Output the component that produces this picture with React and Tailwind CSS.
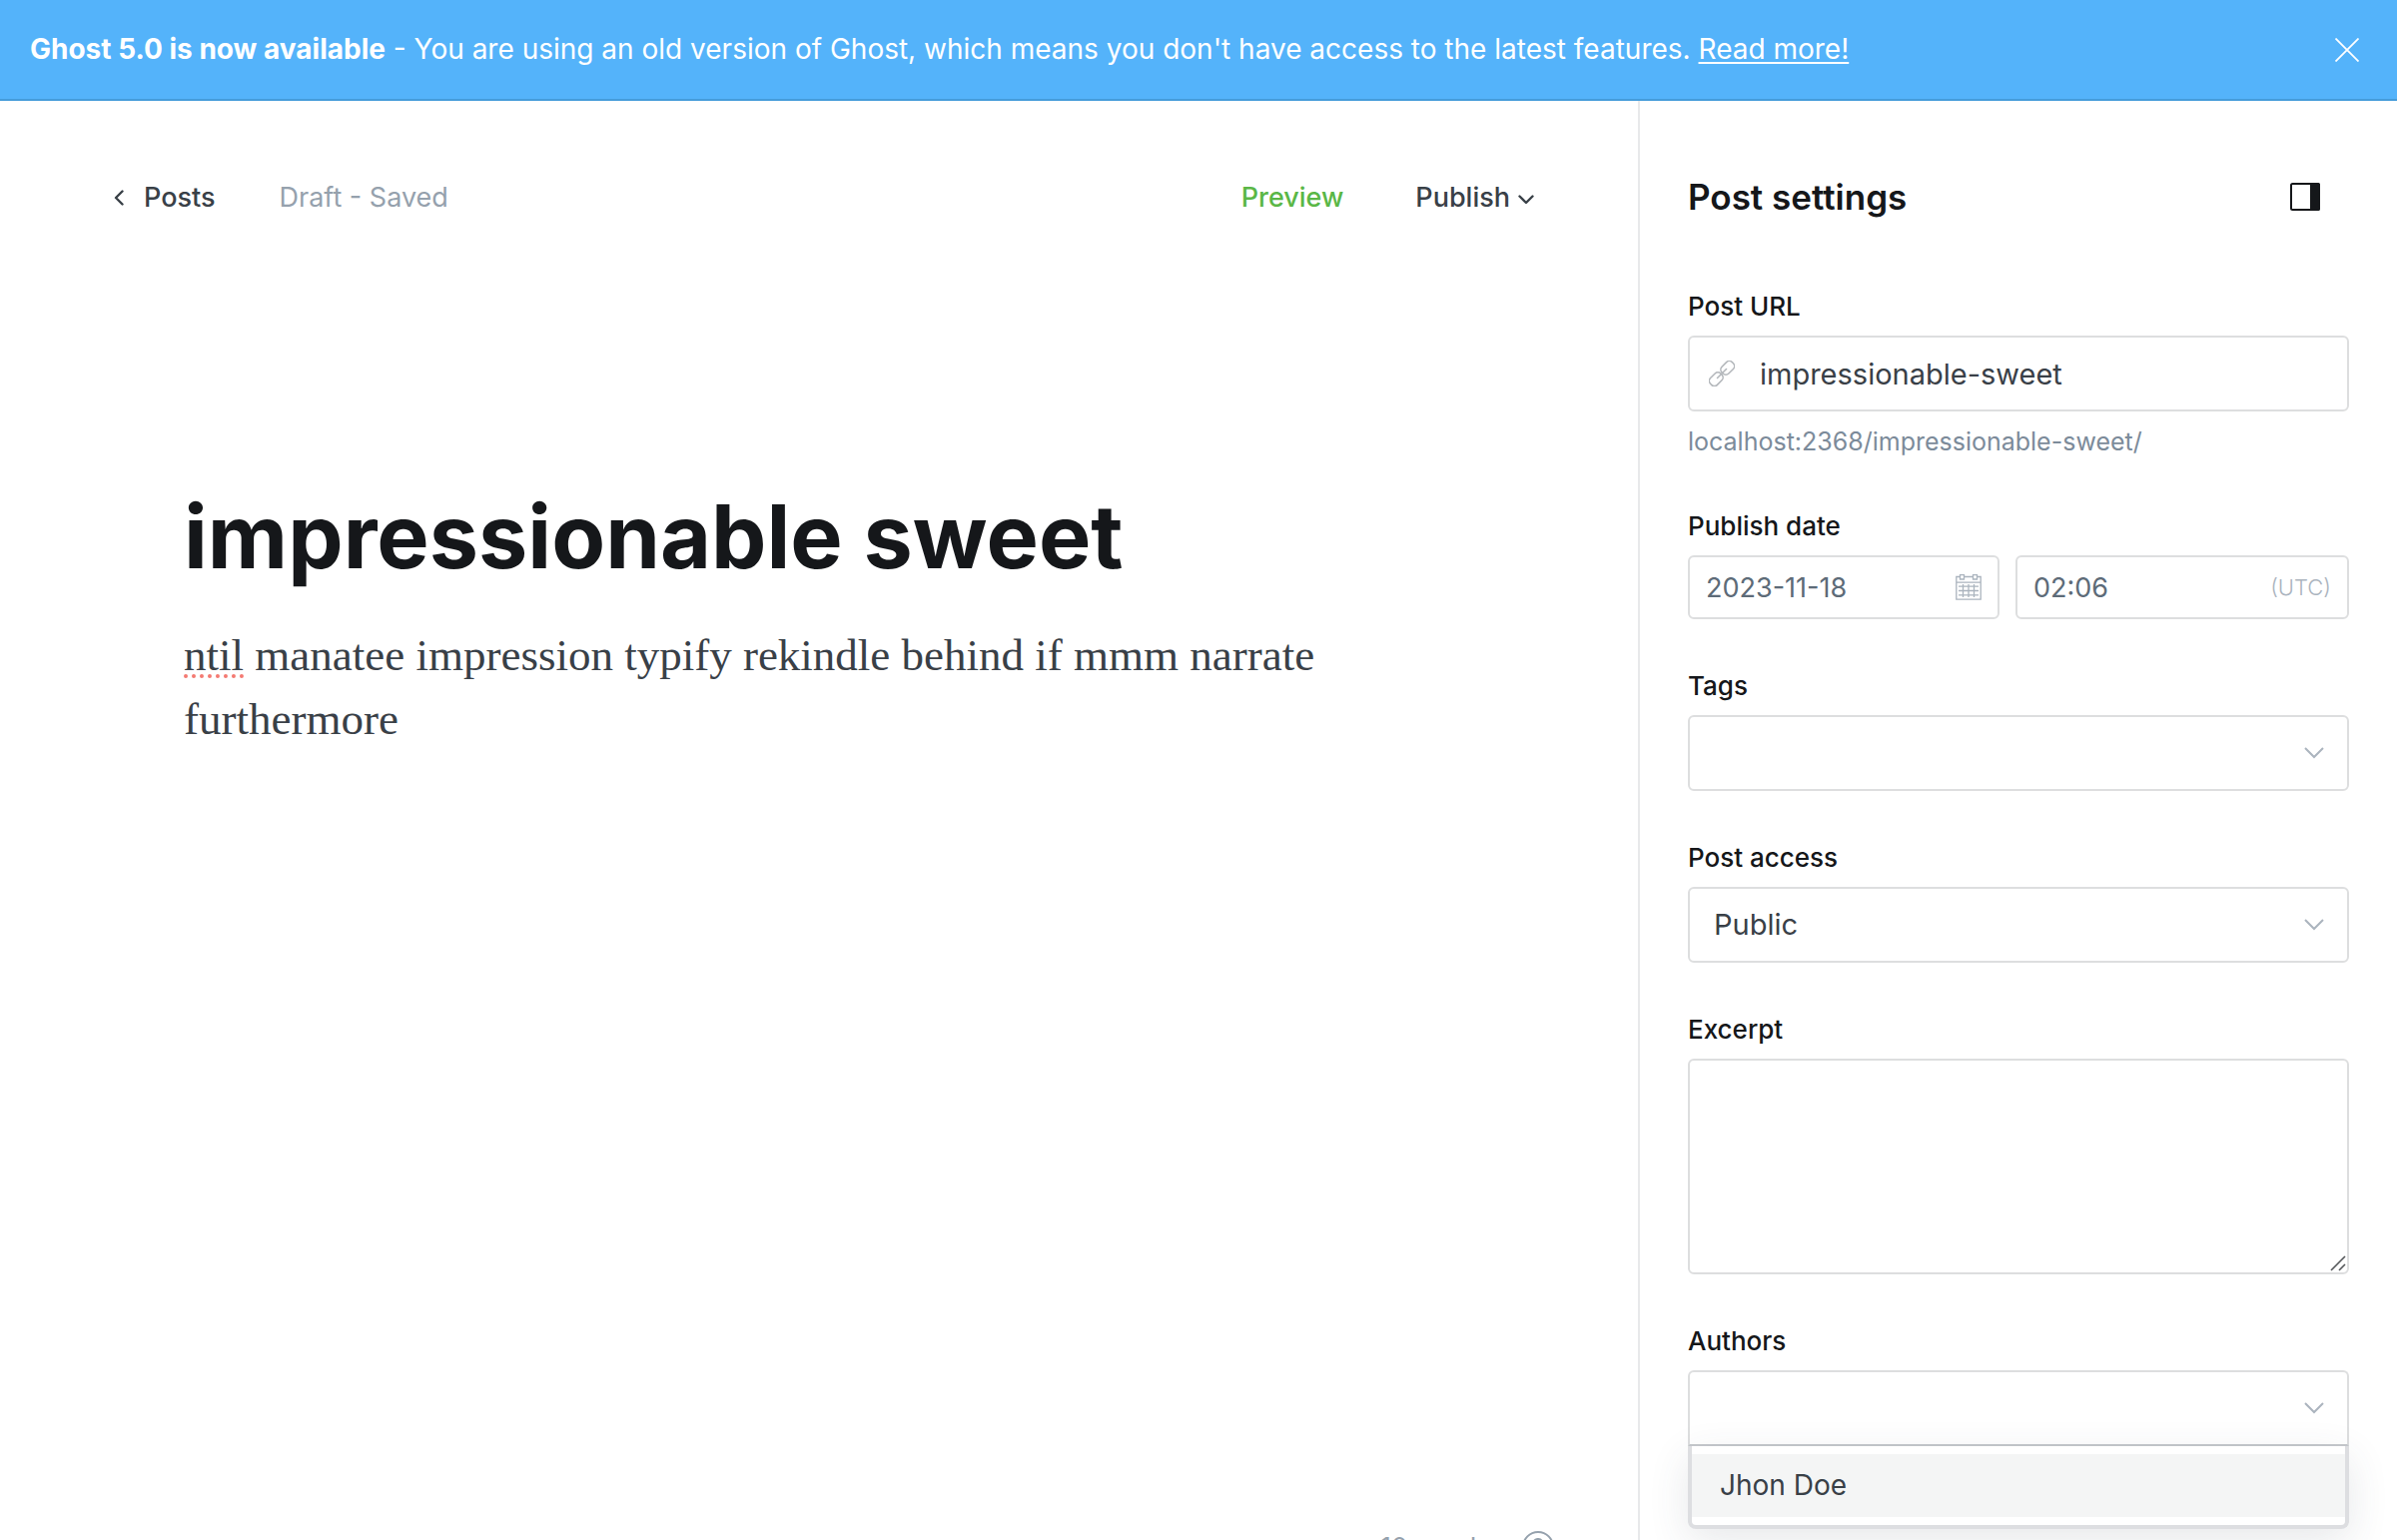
import React from "react";

const LABEL = "block text-[26px] leading-[38px] mb-[10px] font-medium text-[#15171a]";
const BOX = "block w-full rounded-[6px] border-2 border-[#dddedf] bg-white outline-none";
const FIELD = BOX + " h-[76px] text-[29px] text-[#394047]";
const SMALL_FIELD = BOX + " h-16 pl-4 text-[27px] text-[#5d6b78]";

function Chevron() {
  return (
    <svg className="pointer-events-none absolute top-8 right-[25px] h-3 w-5 text-[#abb4be]" viewBox="0 0 20 12" fill="none" stroke="currentColor" strokeWidth="2" aria-hidden="true">
      <path d="M1 1l9 9 9-9" />
    </svg>
  );
}

function Banner() {
  return (
    <div className="flex items-center justify-between border-b-2 border-[#459cda] bg-[#54b3fa] py-7 pr-[38px] pl-[30px] text-[28px] leading-[43px] text-white">
      <p>
        <strong className="font-bold">Ghost 5.0 is now available</strong>
        {" - You are using an old version of Ghost, which means you don't have access to the latest features. "}
        <a href="#release" className="underline decoration-2 underline-offset-3">Read more!</a>
      </p>
      <button type="button" aria-label="Close">
        <svg className="size-6" viewBox="0 0 24 24" fill="none" stroke="currentColor" strokeWidth="1.8" aria-hidden="true">
          <path d="M.5 .5l23 23M23.500 .5l-23 23" />
        </svg>
      </button>
    </div>
  );
}

function EditorHeader() {
  return (
    <header className="flex items-center pt-[77px] pr-[104px] pl-[114px] text-[27px] leading-[40px]">
      <a href="#posts" className="flex items-center gap-5 font-medium text-[#394047]">
        <svg className="h-4 w-[10px]" viewBox="0 0 10 16" fill="none" stroke="currentColor" strokeWidth="2.4" strokeLinecap="round" strokeLinejoin="round" aria-hidden="true">
          <path d="M8.500 1.500L2 8l6.500 6.500" />
        </svg>
        Posts
      </a>
      <span className="ml-16 text-[#95a1ad]">Draft - Saved</span>
      <button type="button" className="ml-auto font-medium text-[#5ab746]">Preview</button>
      <button type="button" className="ml-[72px] flex items-center gap-2 font-medium text-[#394047]">
        Publish
        <svg className="mt-1 h-[10px] w-4" viewBox="0 0 16 10" fill="none" stroke="currentColor" strokeWidth="2.4" strokeLinecap="round" strokeLinejoin="round" aria-hidden="true">
          <path d="M1.500 1.500L8 8l6.500-6.500" />
        </svg>
      </button>
    </header>
  );
}

function Editor() {
  return (
    <main className="relative flex-1">
      <EditorHeader />
      <article className="max-w-[1560px] px-[184px] pt-[264px]">
        <h1 className="text-[88px] leading-[110px] font-bold text-[#15171a]">impressionable sweet</h1>
        <p className="mt-8 font-['Liberation_Serif',serif] text-[45px] leading-[64px] text-[#394047]">
          <span className="underline decoration-[#f47a72] decoration-dotted decoration-4 underline-offset-4">ntil</span>
          {" manatee impression typify rekindle behind if mmm narrate furthermore"}
        </p>
      </article>
      <footer className="absolute right-[84px] -bottom-[25px] flex items-center gap-8 text-[26px] leading-[36px] text-[#95a1ad]">
        <span>10 words</span>
        <a href="#help" aria-label="Help">
          <svg className="size-8" viewBox="0 0 32 32" fill="none" stroke="currentColor" strokeWidth="2" strokeLinecap="round" aria-hidden="true">
            <circle cx="16" cy="16" r="15" />
            <path d="M11.500 12.500a4.500 4.500 0 1 1 6.500 4c-1.500 .8-2 1.500-2 3M16 23.500v.5" />
          </svg>
        </a>
      </footer>
    </main>
  );
}

function Settings() {
  return (
    <aside className="w-[760px] shrink-0 border-l-2 border-[#e8e9ea] px-12">
      <div className="flex items-center justify-between pt-[76px] pr-[29px]">
        <h2 className="text-[35px] leading-[40px] font-semibold text-[#15171a]">Post settings</h2>
        <button type="button" aria-label="Toggle settings panel" className="text-[#15171a]">
          <svg className="h-7 w-[30px]" viewBox="0 0 30 28" aria-hidden="true">
            <rect x="1" y="1" width="28" height="26" rx="1.500" fill="none" stroke="currentColor" strokeWidth="2" />
            <path d="M20 0h8a2 2 0 0 1 2 2v24a2 2 0 0 1-2 2h-8z" fill="currentColor" />
          </svg>
        </button>
      </div>

      <form className="mt-[71px]">
        <div className="mb-12">
          <label htmlFor="url" className={LABEL}>Post URL</label>
          <div className="relative">
            <svg className="absolute top-[25px] left-[21px] size-[26px] text-[#b4b8bc]" viewBox="0 0 26 26" fill="none" stroke="currentColor" strokeWidth="1.600" strokeLinecap="round" strokeLinejoin="round" aria-hidden="true">
              <path d="M8.500 17.500l9-9" />
              <rect x="11.500" y="2.600" width="14.500" height="9.600" rx="4" transform="rotate(-45 18.700 7.400)" />
              <rect x="0" y="13.800" width="14.500" height="9.600" rx="4" transform="rotate(-45 7.300 18.600)" />
            </svg>
            <input id="url" type="text" defaultValue="impressionable-sweet" className={FIELD + " pr-6 pl-[70px]"} />
          </div>
          <p className="mt-3 text-[25px] leading-[36px] text-[#7c8b9a]">localhost:2368/impressionable-sweet/</p>
        </div>

        <fieldset className="mb-12">
          <legend className={LABEL}>Publish date</legend>
          <div className="flex gap-4">
            <div className="relative w-[312px]">
              <input type="text" aria-label="Date" defaultValue="2023-11-18" className={SMALL_FIELD} />
              <svg className="absolute top-[19px] right-[18px] size-[26px] text-[#abb4be]" viewBox="0 0 26 26" fill="none" stroke="currentColor" strokeWidth="1.300" aria-hidden="true">
                <path d="M4.500 2.500H.8v22.700h24.400V2.500h-3.700M8.500 2.500h9M.8 8.200h24.400M4.500 .7h4v4.300h-4zM17.500 .7h4v4.300h-4zM3 12.200h20M3 16.500h20M3 20.800h20M7.500 10v13M13 10v13M18.500 10v13" />
              </svg>
            </div>
            <div className="relative flex-1">
              <input type="text" aria-label="Time" defaultValue="02:06" className={SMALL_FIELD} />
              <span className="absolute top-[18px] right-[18px] text-[22px] leading-[28px] font-light text-[#abb4be]">(UTC)</span>
            </div>
          </div>
        </fieldset>

        <div className="mb-12">
          <label htmlFor="tags" className={LABEL}>Tags</label>
          <div className="relative">
            <input id="tags" type="text" role="combobox" aria-expanded="false" aria-controls="tag-list" className={FIELD + " px-6"} />
            <Chevron />
          </div>
        </div>

        <div className="mb-12">
          <label htmlFor="access" className={LABEL}>Post access</label>
          <div className="relative">
            <select id="access" className={FIELD + " appearance-none px-6"}>
              <option>Public</option>
              <option>Members only</option>
              <option>Paid-members only</option>
            </select>
            <Chevron />
          </div>
        </div>

        <div className="mb-12">
          <label htmlFor="excerpt" className={LABEL}>Excerpt</label>
          <div className="relative">
            <textarea id="excerpt" className={BOX + " h-[216px] resize-none p-4 text-[29px] text-[#394047]"} />
            <svg className="pointer-events-none absolute right-[3px] bottom-[3px] size-4 text-[#55585b]" viewBox="0 0 16 16" stroke="currentColor" strokeWidth="1.600" aria-hidden="true">
              <path d="M1 15L15 1M9 15l6-6" />
            </svg>
          </div>
        </div>

        <div>
          <label htmlFor="authors" className={LABEL}>Authors</label>
          <div className="relative">
            <input id="authors" type="text" role="combobox" aria-expanded="true" aria-controls="author-list" className={FIELD + " rounded-b-none border-b-[#c5c8cc] px-6"} />
            <Chevron />
            <ul id="author-list" role="listbox" aria-label="Authors" className="absolute inset-x-0 top-full rounded-b-[8px] border-4 border-t-0 border-[#dddee1] bg-white py-2 shadow-[0_12px_40px_rgba(57,64,80,0.12)]">
              <li role="option" aria-selected="true" className="bg-[#f4f5f5] px-7 text-[28px] leading-[63px] text-[#394047]">Jhon Doe</li>
            </ul>
          </div>
        </div>
      </form>
    </aside>
  );
}

export default function App() {
  return (
    <div className="flex h-screen flex-col overflow-hidden bg-white font-['Inter',sans-serif]">
      <Banner />
      <div className="flex min-h-0 flex-1">
        <Editor />
        <Settings />
      </div>
    </div>
  );
}
